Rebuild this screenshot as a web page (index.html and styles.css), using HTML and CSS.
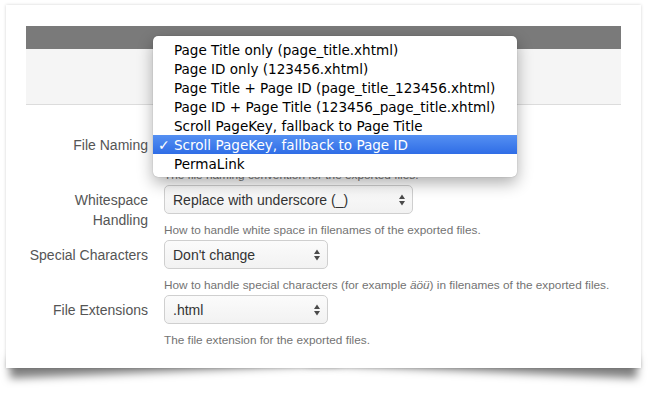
FILE: index.html
```html
<!DOCTYPE html>
<html>
<head>
<meta charset="utf-8">
<link rel="stylesheet" href="styles.css">
</head>
<body>
<div class="stage">
  <div class="card">
    <div class="modal-bar"></div>
    <div class="modal-head"></div>
    <div class="form">
      <div class="row">
        <div class="lbl">File Naming</div>
        <div class="field">
          <div class="select wide"><span></span><svg class="arrows" width="6" height="12" viewBox="0 0 6 12"><path d="M0 5 L3 0.5 L6 5 Z M0 7 L6 7 L3 11.5 Z"/></svg></div>
          <p class="help">The file naming convention for the exported files.</p>
        </div>
      </div>
      <div class="row">
        <div class="lbl">Whitespace Handling</div>
        <div class="field">
          <div class="select wide"><span>Replace with underscore (_)</span><svg class="arrows" width="6" height="12" viewBox="0 0 6 12"><path d="M0 5 L3 0.5 L6 5 Z M0 7 L6 7 L3 11.5 Z"/></svg></div>
          <p class="help">How to handle white space in filenames of the exported files.</p>
        </div>
      </div>
      <div class="row">
        <div class="lbl">Special Characters</div>
        <div class="field">
          <div class="select narrow"><span>Don't change</span><svg class="arrows" width="6" height="12" viewBox="0 0 6 12"><path d="M0 5 L3 0.5 L6 5 Z M0 7 L6 7 L3 11.5 Z"/></svg></div>
          <p class="help">How to handle special characters (for example <em>äöü</em>) in filenames of the exported files.</p>
        </div>
      </div>
      <div class="row">
        <div class="lbl">File Extensions</div>
        <div class="field">
          <div class="select narrow"><span>.html</span><svg class="arrows" width="6" height="12" viewBox="0 0 6 12"><path d="M0 5 L3 0.5 L6 5 Z M0 7 L6 7 L3 11.5 Z"/></svg></div>
          <p class="help">The file extension for the exported files.</p>
        </div>
      </div>
    </div>
    <ul class="menu">
      <li class="item"><span class="check"></span>Page Title only (page_title.xhtml)</li>
      <li class="item"><span class="check"></span>Page ID only (123456.xhtml)</li>
      <li class="item"><span class="check"></span>Page Title + Page ID (page_title_123456.xhtml)</li>
      <li class="item"><span class="check"></span>Page ID + Page Title (123456_page_title.xhtml)</li>
      <li class="item"><span class="check"></span>Scroll PageKey, fallback to Page Title</li>
      <li class="item selected"><span class="check">✓</span>Scroll PageKey, fallback to Page ID</li>
      <li class="item"><span class="check"></span>PermaLink</li>
    </ul>
  </div>
</div>
</body>
</html>
```

FILE: styles.css
```css
html, body {
  margin: 0;
  padding: 0;
  background: #ffffff;
}

.stage {
  position: relative;
  z-index: 0;
  padding: 5px 14px 30px 6px;
  width: 635px;
}

.card {
  position: relative;
  background: #ffffff;
  width: 595px;
  padding: 21px 20px 18px 20px;
  box-shadow: 0 0 3px rgba(0, 0, 0, 0.18);
  font-family: "Liberation Sans", Arial, sans-serif;
}

.card::before,
.card::after {
  content: "";
  position: absolute;
  z-index: -1;
  bottom: 12px;
  width: 52%;
  height: 20px;
  background: #888;
  box-shadow: 0 15px 9px rgba(0, 0, 0, 0.5);
}

.card::before {
  left: 3px;
  transform: rotate(-2.5deg);
}

.card::after {
  right: 3px;
  transform: rotate(2.5deg);
}

.modal-bar {
  height: 23px;
  background: #7a7a7a;
}

.modal-head {
  height: 55px;
  background: #f5f5f5;
  border-bottom: 1px solid #dcdcdc;
}

.form {
  padding-top: 25px;
}

.row {
  display: grid;
  grid-template-columns: 122px 1fr;
  column-gap: 16px;
}

.lbl {
  padding-top: 5px;
  font-size: 14px;
  line-height: 20px;
  color: #555;
  text-align: right;
}

.select {
  box-sizing: border-box;
  height: 29px;
  border: 1px solid #cfcfcf;
  border-radius: 5px;
  background: linear-gradient(#fbfbfb, #f2f2f2);
  display: flex;
  align-items: center;
  justify-content: space-between;
  padding: 0 7px 0 8px;
  font-size: 14px;
  color: #333;
}

.select.wide {
  width: 249px;
}

.select.narrow {
  width: 164px;
}

.arrows {
  fill: #4a4a4a;
}

.help {
  margin: 8px 0 2px 0;
  font-size: 11.8px;
  line-height: 16px;
  color: #737373;
}

.menu {
  position: absolute;
  left: 147px;
  top: 31px;
  width: 364px;
  margin: 0;
  padding: 4px 0;
  list-style: none;
  background: #ffffff;
  border-radius: 5px;
  box-shadow: 0 6px 16px rgba(0, 0, 0, 0.32), 0 0 1px rgba(0, 0, 0, 0.35);
  font-family: "DejaVu Sans", Verdana, sans-serif;
  font-size: 13.55px;
  color: #000;
}

.item {
  display: flex;
  align-items: center;
  height: 19px;
  white-space: nowrap;
}

.check {
  width: 21px;
  padding-left: 5px;
  box-sizing: border-box;
  font-size: 14px;
  font-weight: bold;
}

.item.selected {
  background: linear-gradient(#5590f2, #2f6de6);
  color: #ffffff;
}
```
